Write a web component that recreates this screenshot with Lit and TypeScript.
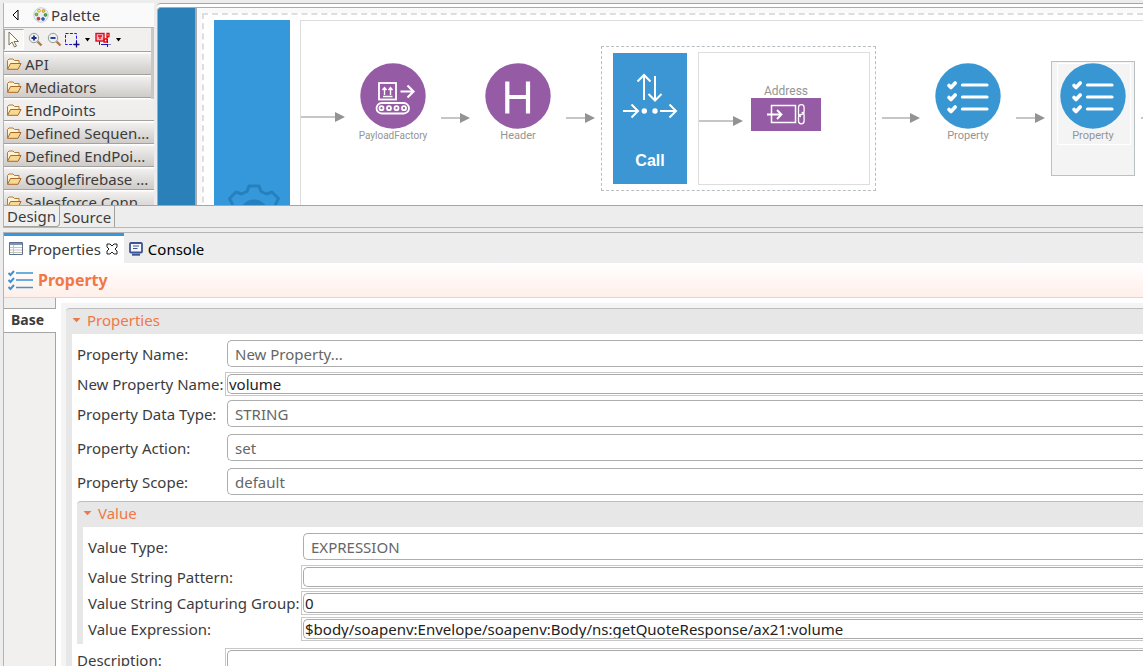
import { LitElement, html, svg, css } from "lit";
import { customElement } from "lit/decorators.js";
import { styleMap } from "lit/directives/style-map.js";

const checks = (stroke: string) => svg`
  <g fill="none" stroke=${stroke} stroke-linecap="round">
    <path stroke-width="3.6" stroke-linejoin="round" d="M14 22.500l2 2 4.200-4.500M14 34.500l2 2 4.200-4.500M14 46.500l2 2 4.200-4.500"/>
    <path stroke-width="3.200" d="M27.500 22h24.500M27.500 34h24.500M27.500 46h24.500"/>
  </g>`;

const nodeArt: Record<string, unknown> = {
  payload: svg`<circle cx="33" cy="33" r="32.700" fill="#955ba5"/>
    <g fill="none" stroke="#fff" stroke-width="1.800">
      <rect x="19" y="20" width="17" height="16.500"/>
      <path stroke-width="1.400" d="M24.500 32v-7M22.500 27l2-2.500 2 2.500M30.500 32v-7M28.500 27l2-2.500 2 2.500M23 33.500h9.500"/>
      <path stroke-width="2.200" d="M40.500 28.500h13M47.500 22.500l6 6-6 6"/>
      <rect x="16.500" y="40" width="32.500" height="10.500" rx="5.200"/>
      <circle cx="21.500" cy="45.200" r="2"/><circle cx="29" cy="45.200" r="2"/>
      <circle cx="36.500" cy="45.200" r="2"/><circle cx="44" cy="45.200" r="2"/>
    </g>`,
  header: svg`<circle cx="33" cy="33" r="32.700" fill="#955ba5"/>
    <path d="M22.300 18.500v32M43 18.500v32M22 34h21" fill="none" stroke="#fff" stroke-width="4.200"/>`,
  property: svg`<circle cx="33" cy="33" r="32.700" fill="#3897d3"/>${checks("#fff")}`,
};

const nodes = [
  { art: "payload", label: "PayloadFactory", x: 51, small: true },
  { art: "header", label: "Header", x: 176 },
  { art: "property", label: "Property", x: 626 },
  { art: "property", label: "Property", x: 751, selected: true },
];

const edges = [
  [0, 44, 96], [140, 169, 97], [265, 294, 97], [398, 442, 100],
  [581, 619, 97], [715, 744, 97], [840, 870, 97],
];

const folders = ["API", "Mediators", "EndPoints", "Defined Sequen...", "Defined EndPoi...", "Googlefirebase ...", "Salesforce Conn..."];

const folderIcon = html`<svg class="folder" width="16" height="14" viewBox="0 0 16 14">
  <path d="M1.500 12V3.500L3 2h4l1.500 1.500H13V6" fill="#fff3d2" stroke="#b4793a"/>
  <path d="M1.500 12.300L4.500 6.500H15L12 12.300Z" fill="#f8d992" stroke="#a9682b" stroke-linejoin="round"/>
</svg>`;

@customElement("app-root")
export class AppRoot extends LitElement {
  static styles = css`
    :host {
      display: block;
      font: 15px/20px "Noto Sans", sans-serif;
      color: #3c3c3c;
    }
    * { box-sizing: border-box; }
    button, input, select { font: inherit; color: inherit; margin: 0; border-radius: 0; }
    button { border: 0; background: none; padding: 0; text-align: left; }
    svg { display: block; flex: none; }
    .app {
      height: 100vh; overflow: hidden; background: #ededed;
      padding: 3px 0 0 3px; display: flex; flex-direction: column; gap: 4px;
    }
    .editor { flex: none; border-left: 1px solid #b4b4b4; border-bottom: 1px solid #b8b8b8; }
    .workspace { display: flex; height: 203px; overflow: hidden; border-bottom: 1px solid #a5a5a5; }

    .palette { flex: none; width: 150px; height: 202px; overflow: hidden; margin-right: 3px; position: relative; }
    .palette-title {
      display: flex; align-items: center; height: 25px; padding-left: 8px; gap: 14px;
      background: #fafafa; border-bottom: 1px solid #b5b2af;
    }
    .palette-title span { display: flex; align-items: center; gap: 2px; }
    .tools { display: flex; align-items: center; height: 23px; background: #f1f0ef; }
    .tool { display: flex; align-items: center; justify-content: center; height: 21px; width: 19px; }
    .tool.on { width: 20px; margin-right: 2px; border: 1px solid #aaa7a4; background: #f7f7f6; border-right-color: #fff; border-bottom-color: #fff; }
    .tool.wide { width: 31px; gap: 5px; justify-content: start; }
    .scroll { position: absolute; right: 0; top: 25px; width: 3px; height: 71px; background: #c9c8c7; }
    .drawer {
      display: flex; align-items: center; gap: 3px; width: 100%; height: 23px; padding: 2px 0 0 2px;
      border-top: 1px solid #a5a19d; white-space: nowrap;
      background: linear-gradient(#fff 1px, #f1f0ef 2px, #cecbc8 22px);
    }
    .drawer.light { background: linear-gradient(#fff 1px, #f1f0ef 2px, #eeedec 22px); }

    .canvas { flex: 1; min-width: 0; display: flex; padding-top: 3px; background: #fff; border: 1px solid #a5a5a5; border-width: 1px 0 0; border-top-left-radius: 4px; }
    .rail { flex: none; width: 40px; background: #2a80b9; border: solid #aaa; border-width: 1px 2px 0 1px; border-radius: 4px 0 0 0; }
    .surface { flex: 1; min-width: 0; padding: 5px 0 0 5px; background: #fafafa; border-top: 1px solid #aaa; }
    .sequence {
      display: flex; gap: 10px; height: 210px; padding: 5px 0 0 10px; background: #fff;
      border: 2px dashed #dedede; border-right: 0;
    }
    .sequence-head { flex: none; width: 76px; background: #3498db; padding: 164px 0 0 4px; display: flex; justify-content: center; align-items: start; }
    .lane { flex: 1; min-width: 0; position: relative; overflow: hidden; border: 1px solid #ddd; border-right: 0; }
    .edges { position: absolute; inset: 0; width: 100%; height: 100%; }
    .node { position: absolute; top: 42px; width: 82px; display: flex; flex-direction: column; align-items: center; }
    .name { font: 11px/14px Roboto, sans-serif; color: #949494; }
    .name.small { font-size: 10px; }
    .selection { position: absolute; left: 750px; top: 40px; width: 84px; height: 115px; background: #f4f4f4; border: 1px solid #bbc0c2; }
    .node.selected::before { content: ""; position: absolute; left: 5px; top: 0; width: 72px; height: 80px; border: 1px solid #fff; }
    .node svg { position: relative; }
    .call { position: absolute; left: 300px; top: 25px; width: 275px; height: 145px; border: 1px dashed #b9bec2; display: flex; gap: 11px; padding: 5px 5px 5px 11px; }
    .call-block {
      flex: none; width: 74px; height: 131px; margin-top: 1px; background: #3b96d3; color: #fff;
      display: flex; flex-direction: column; align-items: center; justify-content: space-between; padding: 20px 0 13px;
      font: bold 16px/20px "Liberation Sans", sans-serif;
    }
    .targets { flex: 1; border: 1px solid #ddd; display: flex; flex-direction: column; align-items: center; padding: 31px 0 0 4px; }
    .targets .name { font-size: 12px; }

    .pages { display: flex; height: 21px; }
    .page { padding: 0 3px; border-right: 1px solid #a5a19d; }
    .page.on { border-bottom: 1px solid #a5a19d; border-bottom-right-radius: 4px; background: #f0f0ef; }

    .view { flex: 1; min-height: 0; display: flex; flex-direction: column; border: 1px solid #b4b4b4; border-width: 1px 0 0 1px; }
    .view-tabs { flex: none; display: flex; height: 30px; }
    .view-tab { display: flex; align-items: center; gap: 5px; padding: 0 6px 2px 5px; border-top: 3px solid transparent; color: #000; }
    .view-tab.on { background: #fff; border-top-color: #3498db; color: #3c3c3c; }
    .view-title {
      flex: none; display: flex; align-items: center; gap: 5px; height: 35px; padding-left: 4px; margin: 0;
      font: bold 16px/20px "Noto Sans", sans-serif; color: #f07746;
      background: linear-gradient(#fff, #ffefea); border-bottom: 1px solid #f1d0c6;
    }
    .view-body { flex: 1; min-height: 0; display: flex; background: #fff; }
    .side { flex: none; width: 52px; background: #f1f0ef; border-right: 1px solid #a5a5a5; padding-top: 10px; }
    .side button { width: 52px; height: 25px; padding: 0 0 2px 7px; font-size: 14px; font-weight: bold; background: #fff; border: solid #a5a5a5; border-width: 1px 0; }
    .form { flex: 1; min-width: 0; margin: 5px 0 0 5px; padding: 5px 0 0 5px; background: #f4f4f5; overflow: hidden; height: 400px; }
    .section { background: #e7e7e7; border-top: 1px solid #bdbdbd; border-top-left-radius: 4px; padding-left: 6px; }
    .section-title { display: flex; align-items: center; gap: 6px; height: 25px; padding-bottom: 3px; color: #f07746; width: 100%; }
    .rows { background: #fff; padding: 3px 0 2px 5px; }
    .row { display: flex; align-items: center; height: 26px; }
    .row.combo { height: 34px; }
    .row label { flex: none; width: 148px; white-space: nowrap; }
    .inner .row label { width: 213px; }
    .inner { margin: 2px 0 3px; }
    .row select {
      appearance: none; flex: 1; min-width: 0; height: 27px; margin: 0 0 1px 2px; padding: 0 7px; color: #666; background: #fff;
      border: 1px solid #adadad; border-right: 0; border-radius: 5px 0 0 5px;
    }
    .text { flex: 1; min-width: 0; height: 24px; padding: 1px 0 1px 1px; border: 1px solid #c8c8c8; border-right: 0; }
    .text input {
      display: block; width: 100%; height: 20px; padding: 0 1px; background: #fff; color: #222;
      border: 1px solid #aaa; border-right: 0; border-radius: 5px 0 0 5px;
    }
  `;

  private combo(id: string, label: string, value: string) {
    return html`<div class="row combo"><label for=${id}>${label}</label>
      <select id=${id}><option>${value}</option></select></div>`;
  }

  private field(id: string, label: string, value: string) {
    return html`<div class="row"><label for=${id}>${label}</label>
      <div class="text"><input id=${id} type="text" .value=${value}></div></div>`;
  }

  private twisty() {
    return html`<svg width="9" height="6" viewBox="0 0 9 6"><path d="M0.500 1h8L4.500 5.200Z" fill="#f07746"/></svg>`;
  }

  private palette() {
    return html`<aside class="palette">
      <div class="palette-title">
        <svg width="7" height="12" viewBox="0 0 7 12"><path d="M6 1v10L1 6Z" fill="#fff" stroke="#000"/></svg>
        <span>
          <svg width="16" height="16" viewBox="0 0 16 16">
            <circle cx="8" cy="8" r="7.300" fill="#e9eff8" stroke="#c3d0e2"/>
            <g stroke-width=".7"><circle cx="6" cy="3.700" r="1.400" fill="#fff36b" stroke="#b79a00"/><circle cx="10.500" cy="4" r="1.400" fill="#ffc93a" stroke="#c87a00"/>
            <circle cx="3.500" cy="7.500" r="1.400" fill="#8cc63f" stroke="#3a8c14"/><circle cx="12.500" cy="8" r="1.400" fill="#50b93c" stroke="#1f7a14"/>
            <circle cx="5.500" cy="11.700" r="1.400" fill="#e03c3c" stroke="#a31515"/><circle cx="10" cy="12" r="1.400" fill="#3c6ed2" stroke="#173f9c"/></g>
          </svg>Palette</span>
      </div>
      <div class="tools">
        <button class="tool on" aria-label="Select"><svg width="12" height="17" viewBox="0 0 12 17"><path d="M1 1v13l3-3 2.500 5 2-1L6 10.500h4.500Z" fill="#fffef0" stroke="#77735c"/></svg></button>
        ${[true, false].map((plus) => html`<button class="tool" aria-label=${plus ? "Zoom in" : "Zoom out"}>
          <svg width="15" height="15" viewBox="0 0 15 15"><path d="M9.500 9.500l4 4" stroke="#b37b48" stroke-width="2.400"/><circle cx="6" cy="6" r="4.700" fill="#eaf0f8" stroke="#9a9a8e"/>
          <path d=${plus ? "M3.500 6h5M6 3.500v5" : "M3.500 6h5"} stroke="#1c2c80" stroke-width="1.800"/></svg></button>`)}
        <button class="tool wide" aria-label="Marquee">
          <svg width="16" height="16" viewBox="0 0 16 16"><rect x="1.500" y="1.500" width="11" height="11" fill="none" stroke="#1515f0" stroke-dasharray="3 1.400"/><path d="M12.500 9.500v6M9.500 12.500h6" stroke="#140a78" stroke-width="1.300"/></svg>
          <svg width="5" height="4" viewBox="0 0 5 4"><path d="M0 0h5L2.500 3.500Z"/></svg></button>
        <button class="tool wide" aria-label="Connection">
          <svg width="16" height="16" viewBox="0 0 16 16"><path d="M4.500 9v3.500H10M12.500 7v8M9.500 12.500h6" fill="none" stroke="#1212b8" stroke-dasharray="4 1"/><rect x="1" y="1.500" width="8" height="7.500" fill="#f7b4c6" stroke="#e00d18" stroke-width="1.400"/><path d="M3 4h4M5 4v3M12 1.500h2v3h-2zM9 7h3v3H9zM13 5l-2 2" fill="none" stroke="#e00d18" stroke-width="1.300"/></svg>
          <svg width="5" height="4" viewBox="0 0 5 4"><path d="M0 0h5L2.500 3.500Z"/></svg></button>
      </div>
      ${folders.map((f) => html`<button class="drawer ${f === "EndPoints" ? "light" : ""}">${folderIcon}${f}</button>`)}
      <div class="scroll"></div>
    </aside>`;
  }

  private diagram() {
    return html`<div class="canvas">
      <div class="rail"></div>
      <div class="surface"><div class="sequence">
        <div class="sequence-head">
          <svg width="54" height="54" viewBox="-27 -27 54 54">
            <path fill="none" stroke="#2580bd" stroke-width="3" stroke-linejoin="round" d="M-5-25H5L7-19.500 12.500-17 18-19 24.500-12.500 21.500-6.500 23 0 21 7 25 13 18 20 12 16 6 19 5 25H-5L-6 19-12 16-18 20-25 13-21 7-23 0-21.500-6.500-24.500-12.500-18-19-12.500-17-7-19.500Z"/>
            <circle cy="3" r="14.500" fill="#2580bd"/><path d="M6-6v8" stroke="#8fc4e8" stroke-width="1.500"/>
          </svg>
        </div>
        <div class="lane">
          <div class="selection"></div>
          <svg class="edges">${edges.map(([a, b, y]) => svg`
            <path d="M${a} ${y}H${b - 9}" stroke="#c6c6c6" stroke-width="2"/>
            <path d="M${b - 10} ${y - 5}v10l10-5Z" fill="#939393"/>`)}</svg>
          ${nodes.map((n) => html`<div class="node ${n.selected ? "selected" : ""}" style=${styleMap({ left: `${n.x}px` })}>
            <svg width="66" height="66" viewBox="0 0 66 66">${nodeArt[n.art]}</svg>
            <span class="name ${n.small ? "small" : ""}">${n.label}</span></div>`)}
          <div class="call">
            <div class="call-block">
              <svg width="56" height="46" viewBox="0 0 56 46" fill="none" stroke="#fff" stroke-width="2">
                <path d="M22 27V2M15.500 8.500L22 2l6.500 6.500M33 3v24M26.500 21L33 27.500l6.500-6.500M1 38h15M9.500 31.500L16 38l-6.500 6.500M38 38h16M47.500 31.500L54 38l-6.500 6.500"/>
                <circle cx="22.300" cy="38" r="2.700" fill="#fff" stroke="none"/><circle cx="33" cy="38" r="2.700" fill="#fff" stroke="none"/>
              </svg>Call
            </div>
            <div class="targets"><span class="name">Address</span>
              <svg width="70" height="33" viewBox="0 0 70 33"><path d="M0 0h70v33H0z" fill="#955ba5"/>
                <g fill="none" stroke="#fff" stroke-width="1.500"><path d="M20.500 7.500H44.500v17H20.500Z"/><path stroke-width="1.900" d="M16 16.500h14.500M26 12l4.500 4.500L26 21"/>
                <path stroke-width="1.300" d="M50 18.500h-.300a2.500 2.500 0 0 1-2.200-2.500V9.500a2.800 2.800 0 0 1 5.600 0v4.500a2.500 2.500 0 0 1-2.800 2.500M50.600 14.500h.300a2.500 2.500 0 0 1 2.200 2.500v6a2.800 2.800 0 0 1-5.600 0v-4a2.500 2.500 0 0 1 2.800-2.500"/></g></svg>
            </div>
          </div>
        </div>
      </div></div>
    </div>`;
  }

  render() {
    return html`<main class="app">
      <section class="editor">
        <div class="workspace">${this.palette()}${this.diagram()}</div>
        <nav class="pages"><button class="page on">Design</button><button class="page">Source</button></nav>
      </section>
      <section class="view">
        <div class="view-tabs">
          <button class="view-tab on">
            <svg width="14" height="13" viewBox="0 0 14 13"><path d="M.5.500h13v12H.5z" fill="#fff" stroke="#5d6f8f"/><path d="M1 2h12" stroke="#8192b4" stroke-width="2"/><path d="M4.500 3v9M1 5.500h12M1 8h12M1 10.500h12" stroke="#c3c4b8"/></svg>
            Properties
            <svg width="12" height="12" viewBox="0 0 12 12"><path d="M1 1h3l2 2 2-2h3v3L9 6l2 2v3H8L6 9l-2 2H1V8l2-2-2-2Z" fill="#fff" stroke="#222"/></svg>
          </button>
          <button class="view-tab">
            <svg width="14" height="14" viewBox="0 0 14 14"><rect x="1" y="1" width="12" height="9.500" rx="1" fill="#f3f6fc" stroke="#3c5590" stroke-width="1.800"/><path d="M4 4h6M4 6.500h4.500" stroke="#3c5590"/><path d="M3 12.700h8" stroke="#3c5590" stroke-width="2"/></svg>
            Console
          </button>
        </div>
        <h1 class="view-title">
          <svg width="25" height="22" viewBox="0 0 25 22" fill="none" stroke="#3897d3" stroke-width="2"><path d="M8 4h17M8 11h17M8 18.500h17" stroke-width="1.600"/><path d="M.5 4l2 2 3.500-4M.5 11l2 2L6 9M.5 18l2 2L6 16"/></svg>
          Property
        </h1>
        <div class="view-body">
          <nav class="side"><button>Base</button></nav>
          <form class="form">
            <div class="section">
              <button type="button" class="section-title">${this.twisty()}Properties</button>
              <div class="rows">
                ${this.combo("name", "Property Name:", "New Property...")}
                ${this.field("newName", "New Property Name:", "volume")}
                ${this.combo("dataType", "Property Data Type:", "STRING")}
                ${this.combo("action", "Property Action:", "set")}
                ${this.combo("scope", "Property Scope:", "default")}
                <div class="section inner">
                  <button type="button" class="section-title">${this.twisty()}Value</button>
                  <div class="rows">
                    ${this.combo("valueType", "Value Type:", "EXPRESSION")}
                    ${this.field("pattern", "Value String Pattern:", "")}
                    ${this.field("group", "Value String Capturing Group:", "0")}
                    ${this.field("expression", "Value Expression:", "$body/soapenv:Envelope/soapenv:Body/ns:getQuoteResponse/ax21:volume")}
                  </div>
                </div>
                ${this.field("description", "Description:", "")}
              </div>
            </div>
          </form>
        </div>
      </section>
    </main>`;
  }
}
